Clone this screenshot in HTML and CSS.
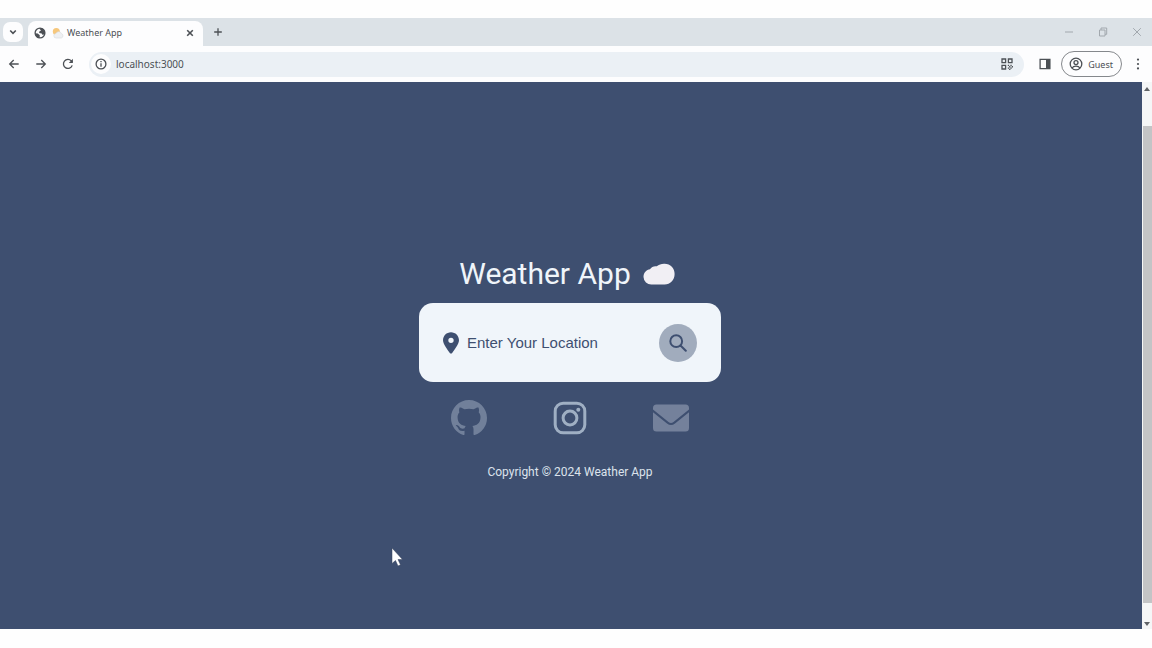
FILE: index.html
```
<!DOCTYPE html>
<html lang="en">
<head>
<meta charset="utf-8">
<meta name="viewport" content="width=device-width, initial-scale=1">
<title>Weather App</title>
<link rel="stylesheet" href="styles.css">
</head>
<body>
<div class="browser">
  <header class="tab-strip">
    <button class="tab-search" aria-label="Search tabs"><svg width="8" height="8" viewBox="0 0 8 8"><path d="M1.2 2.5 4 5.3 6.8 2.5" class="line bold"/></svg></button>
    <div class="tab">
      <svg width="12" height="12" viewBox="0 0 12 12"><circle cx="6" cy="6" r="4.9" class="line"/><path class="solid" d="M1 6.2 3.8 6.4 5.8 8.2 5.6 11C3 11 1 9 1 6.2ZM5 1.2 8.4 1.3 10.8 4.5 11 7 8.7 8 7.7 6.4 5.2 6 5.3 4.4 7 3.5Z"/></svg>
      <svg width="12" height="12" viewBox="0 0 12 12"><circle cx="4.3" cy="4.5" r="3.5" fill="#f6c77c"/><path d="M4.2 11a2.3 2.3 0 0 1-.2-4.6 2.9 2.9 0 0 1 5.4.2A2.3 2.3 0 0 1 9.3 11Z" fill="#eef0f3" stroke="#d6dade" stroke-width=".6"/></svg>
      <span class="tab-title">Weather App</span>
      <button class="plain" aria-label="Close tab"><svg width="8" height="8" viewBox="0 0 8 8"><path d="m1.2 1.2 5.6 5.6m0-5.6L1.2 6.8" class="line bold"/></svg></button>
    </div>
    <button class="plain new-tab" aria-label="New tab"><svg width="8" height="8" viewBox="0 0 8 8"><path d="M4 .2v7.6M.2 4h7.6" class="line"/></svg></button>
    <div class="window-controls">
      <button class="plain" aria-label="Minimize"><svg width="10" height="10" viewBox="0 0 10 10"><path d="M1 5h8" class="line faint"/></svg></button>
      <button class="plain" aria-label="Restore"><svg width="10" height="10" viewBox="0 0 10 10"><path d="M1.500 3h5.500v6H1.500ZM3 3V1h5.700v6.300H7" class="line faint"/></svg></button>
      <button class="plain" aria-label="Close"><svg width="10" height="10" viewBox="0 0 10 10"><path d="m1.200 1.200 7.600 7.600m0-7.600L1.200 8.800" class="line faint"/></svg></button>
    </div>
  </header>
  <nav class="toolbar">
    <button class="plain" aria-label="Back"><svg width="12" height="12" viewBox="0 0 12 12"><path d="M10.700 6H1.800M5.700 2 1.700 6l4 4" class="line"/></svg></button>
    <button class="plain" aria-label="Forward"><svg width="12" height="12" viewBox="0 0 12 12"><path d="M1.300 6h8.900M6.300 2l4 4-4 4" class="line"/></svg></button>
    <button class="plain" aria-label="Reload"><svg width="12" height="12" viewBox="0 0 12 12"><path d="M10.200 7.400A4.500 4.500 0 1 1 9.300 2.900L10.300 4" class="line"/><path d="M10.900.8v4.100H6.800Z" class="solid"/></svg></button>
    <div class="address">
      <button class="site-info" aria-label="Site information"><svg width="12" height="12" viewBox="0 0 12 12"><circle cx="6" cy="6" r="4.900" class="line"/><path d="M6 5.300v3.500M6 3v1.300" class="line"/></svg></button>
      <input class="url" aria-label="Address" value="localhost:3000">
      <button class="plain" aria-label="Create QR code"><svg width="12" height="12" viewBox="0 0 12 12"><path d="M1 1h3.600v3.600H1ZM7.400 1H11v3.600H7.400ZM1 7.400h3.600V11H1Z" class="line"/><path d="M6.800 6.800h1.300v1.300H6.800Zm2.600 0h1.300v1.300H9.400ZM8.100 8.100h1.300v1.300H8.100Zm2.600 0H12v1.300h-1.300ZM6.800 9.400h1.300v1.300H6.800Zm2.600 0h1.300v1.300H9.400Zm-1.300 1.300h1.300V12H8.100Z" class="solid"/></svg></button>
    </div>
    <button class="plain" aria-label="Side panel"><svg width="12" height="12" viewBox="0 0 12 12"><path d="M1.100 1.400h9.800v9.200H1.100Z" class="line"/><path d="M7 1h4v10H7Z" class="solid"/></svg></button>
    <button class="profile"><svg width="14" height="14" viewBox="0 0 14 14"><circle cx="7" cy="7" r="5.800" class="line"/><circle cx="7" cy="5.600" r="2" class="line"/><path d="M3 11c1-1.500 2.300-1.900 4-1.900s3 .4 4 1.900" class="line"/></svg>Guest</button>
    <button class="plain" aria-label="Menu"><svg width="12" height="12" viewBox="0 0 12 12"><circle cx="6" cy="1.600" r="1.100" class="solid"/><circle cx="6" cy="6" r="1.100" class="solid"/><circle cx="6" cy="10.400" r="1.100" class="solid"/></svg></button>
  </nav>
  <div class="viewport">
    <main class="app">
      <h1 class="title">Weather App
        <svg width="32" height="22" viewBox="0 0 32 22"><path fill="#f1eff4" d="M8.500 21.500A7.800 7.800 0 0 1 .5 14C.4 9.800 3.500 6.800 7 6.300 8.500 4 11 2.700 13.800 3.300 15.800 1.400 18.500.6 21.500.7 27.500.8 31.700 5 31.600 11c0 6-4.400 10.500-10 10.500Z"/></svg>
      </h1>
      <form class="search">
        <label for="location"><svg role="img" aria-label="Location" width="16" height="22" viewBox="0 0 384 512"><path fill="#3e4f70" fill-rule="evenodd" d="M215.700 499.200C267 435 384 279.400 384 192 384 86 298 0 192 0S0 86 0 192c0 87.400 117 243 168.300 307.200 12.300 15.300 35.100 15.300 47.400 0ZM192 128a64 64 0 1 1 0 128 64 64 0 0 1 0-128Z"/></svg></label>
        <input class="location" id="location" placeholder="Enter Your Location">
        <button class="go" type="button" aria-label="Search"><svg width="18" height="18" viewBox="0 0 18 18"><circle cx="7.200" cy="7.200" r="5.900"/><path d="m11.500 11.500 5.300 5.300"/></svg></button>
      </form>
      <div class="social">
        <a class="github" href="#github" aria-label="GitHub"><svg width="36" height="36" viewBox="0 0 16 16"><path fill="currentColor" d="M8 0C3.580 0 0 3.580 0 8c0 3.540 2.290 6.530 5.470 7.590.4.070.55-.17.55-.38 0-.19-.01-.82-.01-1.490-2.010.37-2.530-.49-2.690-.94-.09-.23-.48-.94-.82-1.130-.28-.15-.68-.52-.01-.53.63-.01 1.080.58 1.230.82.72 1.210 1.870.87 2.330.66.07-.52.28-.87.51-1.070-1.780-.2-3.640-.89-3.640-3.950 0-.87.31-1.590.82-2.150-.08-.2-.36-1.020.08-2.120 0 0 .67-.21 2.200.82.64-.18 1.320-.27 2-.27s1.360.09 2 .27c1.530-1.040 2.200-.82 2.200-.82.44 1.100.16 1.920.08 2.120.51.56.82 1.270.82 2.150 0 3.070-1.870 3.750-3.650 3.950.29.25.54.73.54 1.480 0 1.070-.01 1.930-.01 2.200 0 .21.15.46.55.38A8.010 8.010 0 0 0 16 8c0-4.420-3.580-8-8-8Z"/></svg></a>
        <a class="instagram" href="#instagram" aria-label="Instagram"><svg width="36" height="36" viewBox="0 0 36 36" fill="none" stroke="currentColor" stroke-width="3"><rect x="3.200" y="3.200" width="29.600" height="29.600" rx="8"/><circle cx="18" cy="18" r="6.900"/><circle cx="26.300" cy="9.700" r="2" fill="currentColor" stroke="none"/></svg></a>
        <a class="mail" href="#mail" aria-label="Email"><svg width="36" height="36" viewBox="0 0 36 36"><path fill="currentColor" d="M3.500 4.500h29A3.500 3.500 0 0 1 36 8v1.500L20.500 21.900q-2.500 2-5 0L0 9.500V8a3.500 3.500 0 0 1 3.500-3.500ZM0 12.300l14 11.200q4 3 8 0l14-11.200V28a3.500 3.500 0 0 1-3.500 3.500h-29A3.500 3.500 0 0 1 0 28Z"/></svg></a>
      </div>
      <footer class="copyright">Copyright © 2024 Weather App</footer>
    </main>
    <div class="scrollbar">
      <svg width="8" height="6" viewBox="0 0 8 6"><path d="M1 5 4 1l3 4Z" fill="#606367"/></svg>
      <div class="track"><div class="thumb"></div></div>
      <svg width="8" height="6" viewBox="0 0 8 6"><path d="m1 1 3 4 3-4Z" fill="#606367"/></svg>
    </div>
  </div>
</div>
<svg class="cursor" width="12" height="20" viewBox="0 0 12 20"><path fill="#fff" stroke="#35415a" stroke-width=".5" d="M1 1v15.500l3.500-3 2.500 5.500 2.500-1.200L7 12.500h4.500Z"/></svg>
</body>
</html>
```
FILE: styles.css
```
* { box-sizing: border-box; }
body {
  margin: 0;
  background: #fefefe;
  color: #4c5055;
  font-family: "Noto Sans", sans-serif;
}
button, input { font: inherit; color: inherit; border: 0; padding: 0; background: none; }
input { outline: 0; min-width: 0; }
svg { display: block; flex: none; }
.line { fill: none; stroke: #4c5055; stroke-width: 1.3; }
.bold { stroke-width: 1.6; }
.faint { stroke: #a2a8ae; stroke-width: 1; }
.solid { fill: #4c5055; }
.plain { display: grid; place-items: center; }

.browser { display: flex; flex-direction: column; min-height: 100vh; padding: 18px 0 19px; }
.tab-strip { display: flex; align-items: center; height: 28px; padding-left: 3px; background: #dce2e7; }
.tab-search { display: grid; place-items: center; width: 20px; height: 20px; border-radius: 7px; background: #fdfdfe; }
.tab {
  display: flex;
  align-items: center;
  gap: 6px;
  align-self: flex-end;
  width: 175px;
  height: 25px;
  margin-left: 5px;
  padding: 0 9px 2px 6px;
  border-radius: 8px 8px 0 0;
  background: #fdfdfe;
  font-size: 9px;
}
.tab-title { flex: 1; margin-left: -3px; }
.new-tab { margin-left: 11px; }
.window-controls { display: flex; gap: 24px; margin-left: auto; padding-right: 10px; }

.toolbar { display: flex; align-items: center; gap: 15px; height: 36px; padding: 0 8px; background: #fdfdfe; }
.address { display: flex; flex: 1; align-items: center; height: 25px; padding: 0 11px 0 2px; border-radius: 13px; background: #ebf0f5; }
.site-info { display: grid; place-items: center; width: 20px; height: 20px; border-radius: 50%; background: #fdfdfe; }
.url { flex: 1; margin-left: 5px; font-size: 10px; }
.profile {
  display: flex;
  align-items: center;
  gap: 5px;
  height: 26px;
  margin: 0 -5px;
  padding: 0 8px 0 7px;
  border: 1px solid #85888c;
  border-radius: 13px;
  font-size: 9px;
}

.viewport { display: flex; flex: 1; background: #3e4f70; }
.app {
  display: flex;
  flex: 1;
  flex-direction: column;
  align-items: center;
  padding: 174px 2px 0 0;
  color: #f0f5fa;
  font-family: Roboto, sans-serif;
}
.title { display: flex; align-items: center; gap: 12px; margin: 0; padding-right: 6px; font-size: 30px; font-weight: 400; line-height: 36px; }
.search {
  display: flex;
  align-items: center;
  width: 302px;
  max-width: 100%;
  height: 79px;
  margin-top: 11px;
  padding: 0 24px;
  border-radius: 14px;
  background: #f0f5fa;
  color: #3e4f70;
}
.location { flex: 1; margin-left: 8px; font: 15px "Liberation Sans", sans-serif; }
.location::placeholder { color: #3e4f70; opacity: 1; }
.go { display: grid; place-items: center; width: 38px; height: 38px; border-radius: 50%; background: #a1acbd; }
.go svg { fill: none; stroke: #3e4f70; stroke-width: 2; stroke-linecap: round; }
.social { display: flex; gap: 65px; margin-top: 18px; }
.github { color: #71809a; }
.instagram { color: #9fafc3; }
.mail { color: #74819b; }
.copyright { margin-top: 28px; font-size: 12px; line-height: 16px; color: #dce3ec; }

.scrollbar {
  display: flex;
  flex-direction: column;
  align-items: center;
  width: 10px;
  padding: 4px 0 2px;
  background: #f5f6f7;
}
.track { flex: 1; align-self: stretch; padding: 34px 0 18px 1px; }
.thumb { height: 100%; background: #c3c4c6; }
.cursor { position: absolute; left: 391px; top: 547px; }
```
